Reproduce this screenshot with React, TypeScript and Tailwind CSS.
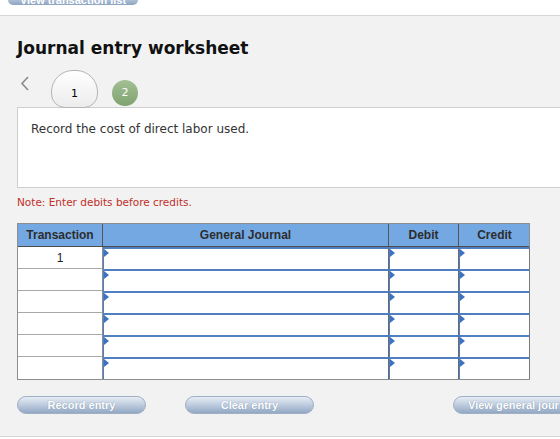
import React from "react";

const rows = ["1", "", "", "", "", ""];

const InputCell = ({ last }: { last?: boolean }) => (
	<div
		className={`relative h-[22px] bg-white border-t-2 border-l border-[#4f7fc2] ${
			last ? "border-r border-r-[#7a7a7a]" : "border-r border-r-[#6a6a6a]"
		}`}
	>
		<span className="absolute left-0 top-0 w-0 h-0 border-y-[4px] border-y-transparent border-l-[5px] border-l-[#3b72c4]" />
	</div>
);

const PillButton = ({ label, className }: { label: string; className?: string }) => (
	<button
		className={`h-[18px] rounded-full border border-[#9fb0c6] bg-[linear-gradient(#e6edf5,#b9c8db_55%,#93a8c4)] text-white font-bold text-[11px] leading-none [text-shadow:0_0_1px_#6d82a0] ${className}`}
		style={{ fontFamily: '"Liberation Sans", Arial, sans-serif' }}
	>
		{label}
	</button>
);

const App = () => {
	return (
		<div
			className="w-[560px] h-[439px] overflow-hidden bg-white"
			style={{ fontFamily: '"DejaVu Sans", Verdana, sans-serif' }}
		>
			{/* top strip with cut-off button */}
			<div className="h-[15px] pl-[8px]">
				<div
					className="w-[130px] h-[5px] overflow-hidden rounded-b-[8px] bg-[linear-gradient(#aebfd5,#8ea4c1)] text-center text-white text-[11px] leading-[1px] font-bold"
					style={{ fontFamily: '"Liberation Sans", Arial, sans-serif' }}
				>
					View transaction list
				</div>
			</div>

			<div className="w-[600px] h-[422px] bg-[#f2f2f2] border-y border-[#d6d6d6] pl-[17px] pt-[21px]">
				<h1 className="text-[17px] leading-[22px] font-bold text-[#111]">
					Journal entry worksheet
				</h1>

				{/* tabs */}
				<div className="flex items-start h-[38px] mt-[11px]">
					<svg width="34" height="38" viewBox="0 0 34 38" className="shrink-0">
						<polyline
							points="11,7 5,13.5 11,20"
							fill="none"
							stroke="#8a8a8a"
							strokeWidth="1.6"
						/>
					</svg>
					<div className="w-[47px] h-[38px] rounded-t-[22px] rounded-b-[14px] border border-[#b5b5b5] bg-[linear-gradient(#ffffff,#ececec)] flex justify-center text-[11px] text-black pt-[15px]">
						1
					</div>
					<div className="ml-[14px] mt-[10px] w-[26px] h-[26px] rounded-full bg-[linear-gradient(#a3c094,#7fa26f)] flex items-center justify-center text-white text-[11px]">
						2
					</div>
				</div>

				{/* instruction box */}
				<div className="-mt-[1px] h-[81px] bg-white border border-[#cfcfcf] pl-[13px] pt-[13px] text-[12px] leading-[16px] text-[#333]">
					Record the cost of direct labor used.
				</div>

				<p className="mt-[7px] text-[10.5px] leading-[14px] text-[#c0302a]">
					Note: Enter debits before credits.
				</p>

				{/* journal table */}
				<div
					className="mt-[14px] w-[513px] border border-[#8d8d8d] bg-white"
					style={{ fontFamily: '"Liberation Sans", Arial, sans-serif' }}
				>
					<div className="grid grid-cols-[85px_286px_70px_71px] h-[23px] bg-[#74a8e3] border-b border-[#4d4d4d] text-[12px] font-bold text-[#2d2d2d]">
						<div className="flex items-center justify-center border-r border-[#555]">Transaction</div>
						<div className="flex items-center justify-center border-r border-[#555]">General Journal</div>
						<div className="flex items-center justify-center border-r border-[#555]">Debit</div>
						<div className="flex items-center justify-center">Credit</div>
					</div>
					{rows.map((t, i) => (
						<div key={i} className="grid grid-cols-[85px_286px_70px_71px]">
							<div
								className={`h-[22px] flex items-center justify-center text-[12px] text-[#222] border-r border-[#8d8d8d] ${
									i < rows.length - 1 ? "border-b border-b-[#a8a8a8]" : ""
								}`}
							>
								{t}
							</div>
							<InputCell />
							<InputCell />
							<InputCell last />
						</div>
					))}
				</div>

				{/* buttons */}
				<div className="flex mt-[16px]">
					<PillButton label="Record entry" className="w-[129px]" />
					<PillButton label="Clear entry" className="w-[129px] ml-[39px]" />
					<PillButton label="View general journal" className="w-[129px] ml-[139px] text-left pl-[14px]" />
				</div>
			</div>
		</div>
	);
};

export default App;
